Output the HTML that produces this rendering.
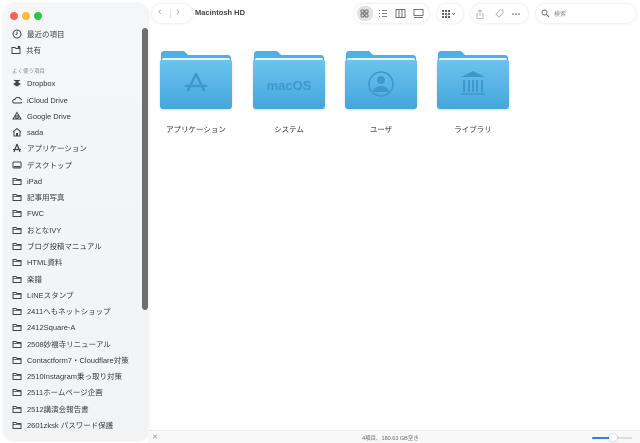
<!DOCTYPE html>
<html><head><meta charset="utf-8"><style>
*{margin:0;padding:0;box-sizing:border-box}
body{width:640px;height:443px;overflow:hidden;background:#fff;font-family:"Liberation Sans","Noto Sans CJK JP",sans-serif;position:relative;color:#333}
.sb{position:absolute;left:4px;top:4px;width:144px;height:436px;background:linear-gradient(180deg,#f4f6f8,#f1f3f5);border-radius:10px;box-shadow:0 0 3px rgba(0,0,0,.12);overflow:hidden}
.dot{position:absolute;top:8px;width:8px;height:8px;border-radius:50%}
.it{position:absolute;left:10px;font-size:7.5px;color:#3a3a3a;display:flex;align-items:center;height:12px;white-space:nowrap}
.it svg{width:10px;height:10px;margin-right:5px;flex:none}
.hd{position:absolute;left:8px;font-size:5.5px;color:#888}
.scroll{position:absolute;left:138px;top:24px;width:6px;height:282px;background:#6e6e6e;border-radius:3px}
.pill{position:absolute;top:4px;height:19px;background:#fff;border-radius:10px;box-shadow:0 0 3px rgba(0,0,0,.12)}
.fold{position:absolute;top:50px;width:72px;height:60px;filter:drop-shadow(0 1px 1px rgba(0,0,0,.15))}
.lbl{position:absolute;top:124px;font-size:7.5px;color:#333;width:100px;text-align:center}
.status{position:absolute;left:148px;top:430px;width:492px;height:13px;background:#f8f8f8;border-top:1px solid #eaeaea;font-size:5.5px;color:#666}
</style></head><body>
<div class="sb">
<div class="dot" style="left:6px;background:#ff5f57"></div>
<div class="dot" style="left:18px;background:#febc2e"></div>
<div class="dot" style="left:30px;background:#28c840"></div>
<div class="scroll"></div>
</div>
<div id="items"></div>
<script>
const items=[[34,"最近の項目","c"],[50,"共有","s"],[83,"Dropbox","d"],[100,"iCloud Drive","cl"],[116,"Google Drive","g"],[132,"sada","h"],[148,"アプリケーション","a"],[165,"デスクトップ","m"],[181,"iPad"],[197,"記事用写真"],[213,"FWC"],[230,"おとなIVY"],[246,"ブログ投稿マニュアル"],[262,"HTML資料"],[279,"楽譜"],[295,"LINEスタンプ"],[311,"2411へもネットショップ"],[327,"2412Square-A"],[344,"2508妙福寺リニューアル"],[360,"Contactform7・Cloudflare対策"],[376,"2510Instagram乗っ取り対策"],[392,"2511ホームページ企画"],[409,"2512講演会報告書"],[425,"2601zksk パスワード保護"]];
const ic={
f:'<path d="M1 2.5h3l1 1h4v5H1z" fill="none" stroke="#444" stroke-width="1"/><path d="M1 4.5h8" stroke="#444" stroke-width=".8"/>',
c:'<circle cx="5" cy="5" r="4" fill="none" stroke="#444"/><path d="M5 2.5V5L3.5 6" fill="none" stroke="#444"/>',
s:'<path d="M1 2.5h3l1 1h4v5H1z" fill="none" stroke="#444"/><circle cx="8" cy="2" r="1.3" fill="#444"/>',
d:'<path d="M2 2l3 2 -3 2 3 2 3-2-3-2 3-2M5 4v4" fill="#444" stroke="#444"/>',
cl:'<path d="M2 8h6.5a2 2 0 0 0 0-4A3 3 0 0 0 3 4.5 1.8 1.8 0 0 0 2 8z" fill="none" stroke="#444"/>',
g:'<path d="M5 1.5l4 6.5H1z" fill="none" stroke="#444"/><circle cx="5" cy="6" r="1.3" fill="none" stroke="#444"/>',
h:'<path d="M1 5l4-3.5L9 5M2 4.5V9h6V4.5" fill="none" stroke="#444"/><rect x="4" y="6" width="2" height="3" fill="#444"/>',
a:'<path d="M5 1L2 9M5 1l3 8M1 6.5h8" stroke="#444" stroke-width="1.2"/>',
m:'<rect x="1" y="2" width="8" height="6" rx="1" fill="none" stroke="#444"/><rect x="2" y="6" width="6" height="1.2" fill="#444"/>'};
let h='';
for(const [y,t,k] of items){h+=`<div class="it" style="top:${y-6}px;left:${k=='s'?11:12}px"><svg viewBox="0 0 10 10">${ic[k||'f']}</svg>${t}</div>`;}
h+='<div class="hd" style="top:67px;left:12px">よく使う項目</div>';
document.getElementById('items').innerHTML=h;
</script>

<div class="pill" style="left:152px;width:40px"></div>
<div style="position:absolute;left:158px;top:6px;font-size:11px;color:#aaa">‹</div>
<div style="position:absolute;left:176px;top:6px;font-size:11px;color:#aaa">›</div>
<div style="position:absolute;left:170px;top:9px;width:1px;height:9px;background:#e5e5e5"></div>
<div style="position:absolute;left:195px;top:8px;font-size:7.5px;font-weight:bold;color:#444">Macintosh HD</div>

<div class="pill" style="left:354px;width:75px"></div>
<div style="position:absolute;left:357px;top:6px;width:16px;height:15px;background:#e2e2e2;border-radius:7px"></div>
<svg style="position:absolute;left:354px;top:4px" width="75" height="19" viewBox="0 0 75 19" fill="none" stroke="#555" stroke-width=".8">
<rect x="7" y="6" width="3" height="3" rx=".7"/><rect x="11" y="6" width="3" height="3" rx=".7"/><rect x="7" y="10" width="3" height="3" rx=".7"/><rect x="11" y="10" width="3" height="3" rx=".7"/>
<path d="M25 6.5h1M25 9.5h1M25 12.5h1M28 6.5h5M28 9.5h5M28 12.5h5"/>
<rect x="42" y="5.5" width="9" height="8"/><path d="M45 5.5v8M48 5.5v8"/>
<rect x="60" y="5.5" width="9" height="6"/><path d="M60 13.5h9"/></svg>
<div class="pill" style="left:437px;width:26px"></div>
<svg style="position:absolute;left:437px;top:4px" width="26" height="19" fill="#666"><rect x="5" y="6" width="2" height="2"/><rect x="8" y="6" width="2" height="2"/><rect x="11" y="6" width="2" height="2"/><rect x="5" y="9" width="2" height="2"/><rect x="8" y="9" width="2" height="2"/><rect x="11" y="9" width="2" height="2"/><rect x="5" y="12" width="2" height="2"/><rect x="8" y="12" width="2" height="2"/><rect x="11" y="12" width="2" height="2"/><path d="M15 9l1.5 1.5L18 9" stroke="#666" fill="none" stroke-width=".8"/></svg>
<div class="pill" style="left:471px;width:57px"></div>
<svg style="position:absolute;left:471px;top:4px" width="57" height="19" fill="none" stroke="#aaa" stroke-width=".8"><path d="M9 6v6M7 8l2-2 2 2M7 9.5H6v5h6v-5h-1"/><path d="M25 10l4-4h3v3l-4 4z"/><circle cx="42" cy="10" r=".8" fill="#555" stroke="none"/><circle cx="45" cy="10" r=".8" fill="#555" stroke="none"/><circle cx="48" cy="10" r=".8" fill="#555" stroke="none"/></svg>
<div class="pill" style="left:536px;width:100px"></div>
<svg style="position:absolute;left:541px;top:9px" width="9" height="9" fill="none" stroke="#666" stroke-width=".9"><circle cx="3.5" cy="3.5" r="2.5"/><path d="M5.5 5.5L8 8"/></svg>
<div style="position:absolute;left:554px;top:9px;font-size:6px;color:#888">検索</div>

<svg width="0" height="0" style="position:absolute"><defs>
<linearGradient id="fg" x1="0" y1="0" x2="0" y2="1"><stop offset="0" stop-color="#6cc3ef"/><stop offset="1" stop-color="#44a6db"/></linearGradient></defs></svg>
<div id="folders"></div>
<script>
const xs=[160,253,345,437],labels=["アプリケーション","システム","ユーザ","ライブラリ"];
const C="#3f97cb";
const sym=[
'<path d="M36 24l-8 16M36 24l8 16M26 36h20" stroke="'+C+'" stroke-width="2.5" fill="none" stroke-linecap="round"/>',
'<text x="36" y="40" text-anchor="middle" font-family="Liberation Sans" font-weight="bold" font-size="13" fill="'+C+'">macOS</text>',
'<circle cx="36" cy="34" r="12" fill="none" stroke="'+C+'" stroke-width="1.6"/><circle cx="36" cy="30" r="4" fill="'+C+'"/><path d="M28 42a8 6 0 0 1 16 0" fill="'+C+'"/>',
'<path d="M24 27l12-6 12 6z" fill="'+C+'"/><path d="M27 30v12M32 30v12M36 30v12M40 30v12M45 30v12" stroke="'+C+'" stroke-width="2"/><path d="M24 44h24" stroke="'+C+'" stroke-width="1.5"/>'];
let f='';
xs.forEach((x,i)=>{f+=`<svg class="fold" style="left:${x}px" viewBox="0 0 72 60"><path d="M1 4a3 3 0 0 1 3-3h20l4 4h40a3 3 0 0 1 3 3v6H1z" fill="#4fb0e3"/><rect x="2" y="8" width="68" height="5" rx="2" fill="#e8f4fb"/><path d="M0 12a2 2 0 0 1 2-2h68a2 2 0 0 1 2 2v44a3 3 0 0 1-3 3H3a3 3 0 0 1-3-3z" fill="url(#fg)"/>${sym[i]}</svg><div class="lbl" style="left:${x-14}px">${labels[i]}</div>`;});
document.getElementById('folders').innerHTML=f;
</script>

<div class="status">
<div style="position:absolute;left:4px;top:2px;font-size:7px;color:#999">✕</div>
<div style="position:absolute;left:214px;top:3px">4項目、180.63 GB空き</div>
<div style="position:absolute;left:444px;top:6px;width:40px;height:1.5px;background:#ddd"></div>
<div style="position:absolute;left:444px;top:5.5px;width:18px;height:2.5px;background:#2f7ff0;border-radius:1px"></div>
<div style="position:absolute;left:461px;top:3px;width:8px;height:7px;background:#fff;border-radius:4px;box-shadow:0 0 2px rgba(0,0,0,.3)"></div>
</div>
</body></html>
